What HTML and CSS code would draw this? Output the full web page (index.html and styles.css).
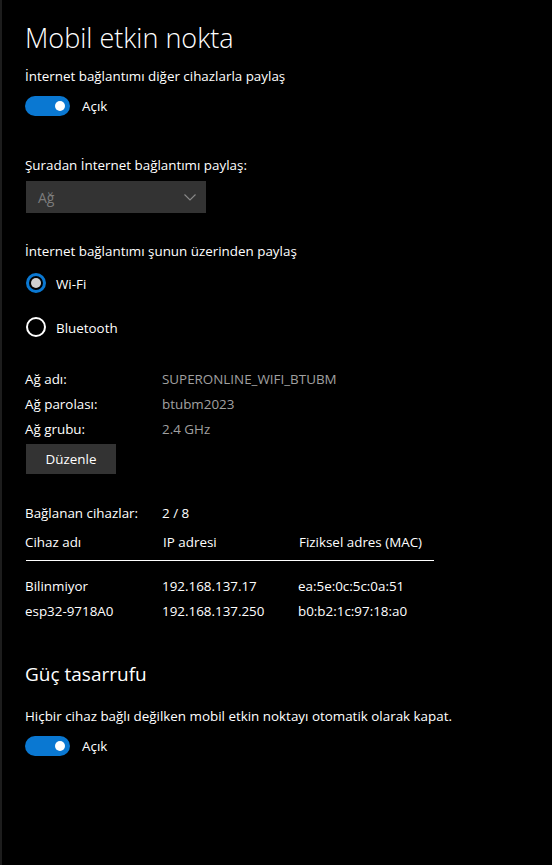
FILE: index.html
```html
<!DOCTYPE html>
<html lang="tr">
<head>
<meta charset="utf-8">
<title>Mobil etkin nokta</title>
<link rel="stylesheet" href="styles.css">
</head>
<body>
<div class="page">
  <h1 class="title">Mobil etkin nokta</h1>

  <p class="label">İnternet bağlantımı diğer cihazlarla paylaş</p>
  <div class="toggle-row">
    <span class="toggle"><span class="knob"></span></span>
    <span class="toggle-text">Açık</span>
  </div>

  <p class="label from-label">Şuradan İnternet bağlantımı paylaş:</p>
  <div class="select">
    <span class="select-text">Ağ</span>
    <svg class="chevron" width="12" height="7" viewBox="0 0 12 7"><path d="M0.5 0.5 L6 6 L11.5 0.5" fill="none" stroke="#8a8a8a" stroke-width="1.1"/></svg>
  </div>

  <p class="label via-label">İnternet bağlantımı şunun üzerinden paylaş</p>
  <div class="radio-row">
    <span class="radio checked"><span class="dot"></span></span>
    <span class="radio-text">Wi-Fi</span>
  </div>
  <div class="radio-row">
    <span class="radio"></span>
    <span class="radio-text">Bluetooth</span>
  </div>

  <div class="info">
    <span class="key">Ağ adı:</span><span class="val">SUPERONLINE_WIFI_BTUBM</span>
    <span class="key">Ağ parolası:</span><span class="val">btubm2023</span>
    <span class="key">Ağ grubu:</span><span class="val">2.4 GHz</span>
  </div>
  <button class="btn">Düzenle</button>

  <div class="devices">
    <div class="count"><span>Bağlanan cihazlar:</span><span>2 / 8</span></div>
    <div class="trow thead"><span>Cihaz adı</span><span>IP adresi</span><span>Fiziksel adres (MAC)</span></div>
    <div class="trow first"><span>Bilinmiyor</span><span>192.168.137.17</span><span>ea:5e:0c:5c:0a:51</span></div>
    <div class="trow"><span>esp32-9718A0</span><span>192.168.137.250</span><span>b0:b2:1c:97:18:a0</span></div>
  </div>

  <h2 class="subtitle">Güç tasarrufu</h2>
  <p class="label">Hiçbir cihaz bağlı değilken mobil etkin noktayı otomatik olarak kapat.</p>
  <div class="toggle-row">
    <span class="toggle"><span class="knob"></span></span>
    <span class="toggle-text">Açık</span>
  </div>
</div>
</body>
</html>
```
FILE: styles.css
```css
* { box-sizing: border-box; }
html, body { margin: 0; padding: 0; background: #000; }
body {
  font-family: "Open Sans", "Noto Sans", sans-serif;
  font-size: 13.4px;
  color: #fff;
}
.page {
  min-height: 865px;
  border-left: 2px solid #1d1d1d;
  padding: 18px 0 0 23px;
}
.title {
  margin: 0;
  font-size: 27px;
  font-weight: 300;
  line-height: 40px;
}
.label {
  margin: 0;
  line-height: 20px;
}
.title + .label { margin-top: 8px; }
.toggle-row {
  display: flex;
  align-items: center;
  gap: 12px;
  margin-top: 10px;
  height: 20px;
}
.toggle {
  width: 45px;
  height: 20px;
  border-radius: 10px;
  background: #0a78d2;
  position: relative;
  display: block;
}
.knob {
  position: absolute;
  width: 10px;
  height: 10px;
  border-radius: 50%;
  background: #fff;
  right: 5px;
  top: 5px;
}
.toggle-text { line-height: 20px; }
.from-label { margin-top: 39px; }
.select {
  margin-top: 6px;
  width: 180px;
  height: 32px;
  background: #333;
  display: flex;
  align-items: center;
  justify-content: space-between;
  padding: 0 10px 0 12px;
  margin-left: 1px;
}
.select-text { color: #7c7c7c; font-size: 14px; }
.via-label { margin-top: 28px; }
.radio-row {
  display: flex;
  align-items: center;
  gap: 10px;
  margin-top: 12px;
  height: 20px;
}
.radio-row + .radio-row { margin-top: 24px; }
.radio {
  width: 20px;
  height: 20px;
  border-radius: 50%;
  border: 2px solid #fff;
  display: flex;
  align-items: center;
  justify-content: center;
  margin-left: 1px;
}
.radio.checked { border: 3px solid #0a78d2; }
.dot {
  width: 10px;
  height: 10px;
  border-radius: 50%;
  background: #d0d0d0;
}
.radio-text { padding-top: 1px; }
.info {
  display: grid;
  grid-template-columns: 137px auto;
  grid-auto-rows: 25px;
  align-items: center;
  margin-top: 29px;
}
.val { color: #a0a0a0; }
.btn {
  margin: 3px 0 0 1px;
  width: 90px;
  height: 30px;
  border: 0;
  background: #333;
  color: #fff;
  font-family: inherit;
  font-size: 13.4px;
  padding: 0;
}
.devices { margin-top: 26px; width: 409px; }
.count, .trow {
  display: grid;
  grid-template-columns: 137px 136px auto;
  height: 25px;
  align-items: center;
}
.thead {
  margin-top: 5px;
  border-bottom: 1.5px solid #fff;
  height: 31px;
  padding-bottom: 6px;
  margin-left: 1px;
}
.thead span:first-child { margin-left: -1px; }
.trow.first { margin-top: 12px; }
.subtitle {
  margin: 37px 0 0 0;
  font-size: 19px;
  font-weight: 400;
  line-height: 28px;
}
.subtitle + .label { margin-top: 18px; }
```
